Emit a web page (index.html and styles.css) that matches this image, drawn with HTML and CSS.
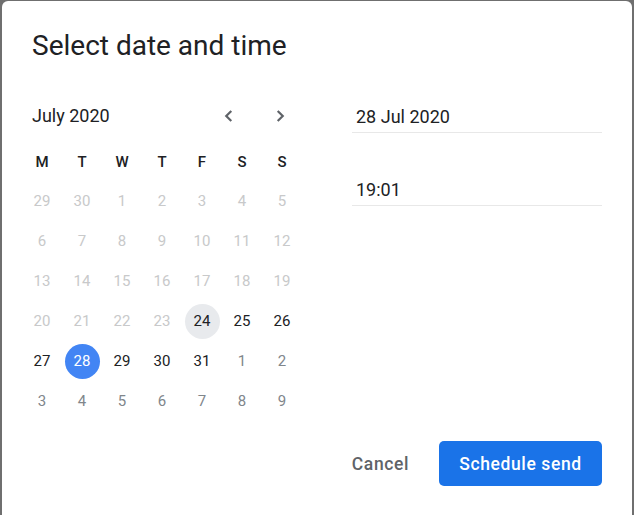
FILE: index.html
```html
<!DOCTYPE html>
<html>
<head>
<meta charset="utf-8">
<link rel="stylesheet" href="styles.css">
</head>
<body>
<div class="dialog">
  <h1 class="title">Select date and time</h1>
  <div class="content">
    <div class="calendar">
      <div class="cal-head">
        <span class="month">July 2020</span>
        <div class="nav">
          <button class="nav-btn" aria-label="Previous month"><svg viewBox="0 0 24 24" width="22" height="22"><path d="M14.5 6.5L9 12l5.5 5.5" fill="none" stroke="#5f6368" stroke-width="2.4"/></svg></button>
          <button class="nav-btn" aria-label="Next month"><svg viewBox="0 0 24 24" width="22" height="22"><path d="M9.5 6.5L15 12l-5.5 5.5" fill="none" stroke="#5f6368" stroke-width="2.4"/></svg></button>
        </div>
      </div>
      <div class="weekdays">
        <span>M</span><span>T</span><span>W</span><span>T</span><span>F</span><span>S</span><span>S</span>
      </div>
      <div class="days">
        <span class="day off"><i>29</i></span><span class="day off"><i>30</i></span><span class="day off"><i>1</i></span><span class="day off"><i>2</i></span><span class="day off"><i>3</i></span><span class="day off"><i>4</i></span><span class="day off"><i>5</i></span>
        <span class="day off"><i>6</i></span><span class="day off"><i>7</i></span><span class="day off"><i>8</i></span><span class="day off"><i>9</i></span><span class="day off"><i>10</i></span><span class="day off"><i>11</i></span><span class="day off"><i>12</i></span>
        <span class="day off"><i>13</i></span><span class="day off"><i>14</i></span><span class="day off"><i>15</i></span><span class="day off"><i>16</i></span><span class="day off"><i>17</i></span><span class="day off"><i>18</i></span><span class="day off"><i>19</i></span>
        <span class="day off"><i>20</i></span><span class="day off"><i>21</i></span><span class="day off"><i>22</i></span><span class="day off"><i>23</i></span><span class="day today"><i>24</i></span><span class="day"><i>25</i></span><span class="day"><i>26</i></span>
        <span class="day"><i>27</i></span><span class="day selected"><i>28</i></span><span class="day"><i>29</i></span><span class="day"><i>30</i></span><span class="day"><i>31</i></span><span class="day next"><i>1</i></span><span class="day next"><i>2</i></span>
        <span class="day next"><i>3</i></span><span class="day next"><i>4</i></span><span class="day next"><i>5</i></span><span class="day next"><i>6</i></span><span class="day next"><i>7</i></span><span class="day next"><i>8</i></span><span class="day next"><i>9</i></span>
      </div>
    </div>
    <div class="fields">
      <div class="field">28 Jul 2020</div>
      <div class="field field-time">19:01</div>
    </div>
  </div>
  <div class="actions">
    <button class="btn btn-text">Cancel</button>
    <button class="btn btn-primary">Schedule send</button>
  </div>
</div>
</body>
</html>
```

FILE: styles.css
```css
html, body {
  margin: 0;
  padding: 0;
}
body {
  background: #6f6f6f;
  width: 634px;
  height: 515px;
  overflow: hidden;
  font-family: Roboto, "Liberation Sans", sans-serif;
  color: #202124;
}
.dialog {
  margin: 1px 2px 0 2px;
  height: 520px;
  background: #fff;
  border-radius: 6px 6px 0 0;
  padding: 25px 30px 0 19px;
  box-sizing: border-box;
}
.title {
  margin: 0 0 34px 11px;
  font-size: 28px;
  font-weight: 400;
  line-height: 40px;
  color: #202124;
  letter-spacing: 0;
}
.content {
  display: flex;
  gap: 51px;
}
.calendar {
  width: 280px;
}
.cal-head {
  display: flex;
  align-items: center;
  height: 32px;
  padding: 0 10px 0 11px;
}
.month {
  flex: 1;
  font-size: 18px;
  line-height: 32px;
  color: #202124;
}
.nav {
  display: flex;
  gap: 29px;
}
.nav-btn {
  width: 22px;
  height: 22px;
  padding: 0;
  border: 0;
  background: none;
  display: flex;
}
.weekdays {
  display: grid;
  grid-template-columns: repeat(7, 40px);
  margin: 11px 0 0 1px;
  height: 38px;
  align-items: center;
  font-size: 15px;
  font-weight: 500;
  text-align: center;
  color: #202124;
}
.days {
  display: grid;
  grid-template-columns: repeat(7, 40px);
  grid-auto-rows: 40px;
  margin-left: 1px;
  font-size: 15px;
}
.day {
  display: flex;
  align-items: center;
  justify-content: center;
  color: #202124;
}
.day i {
  font-style: normal;
  width: 35px;
  height: 35px;
  border-radius: 50%;
  display: flex;
  align-items: center;
  justify-content: center;
}
.day.off {
  color: #c8c9ca;
}
.day.next {
  color: #80868b;
}
.day.today i {
  background: #e8eaed;
}
.day.selected i {
  background: #4285f4;
  color: #fff;
}
.fields {
  width: 250px;
  padding-top: 5px;
}
.field {
  font-size: 18px;
  line-height: 24px;
  padding: 0 4px 3px;
  border-bottom: 1px solid #e8e8e8;
  color: #202124;
}
.field-time {
  margin-top: 45px;
  padding-bottom: 3px;
}
.actions {
  display: flex;
  justify-content: flex-end;
  gap: 16px;
  margin-top: 20px;
}
.btn {
  font-family: Roboto, "Liberation Sans", sans-serif;
  font-size: 17.5px;
  font-weight: 500;
  letter-spacing: 0.6px;
  height: 45px;
  border: 0;
  border-radius: 5px;
  padding: 0 15px;
  cursor: pointer;
}
.btn-text {
  background: none;
  color: #5f6368;
  padding: 0 14px;
}
.btn-primary {
  background: #1a73e8;
  color: #fff;
  width: 163px;
}
```
